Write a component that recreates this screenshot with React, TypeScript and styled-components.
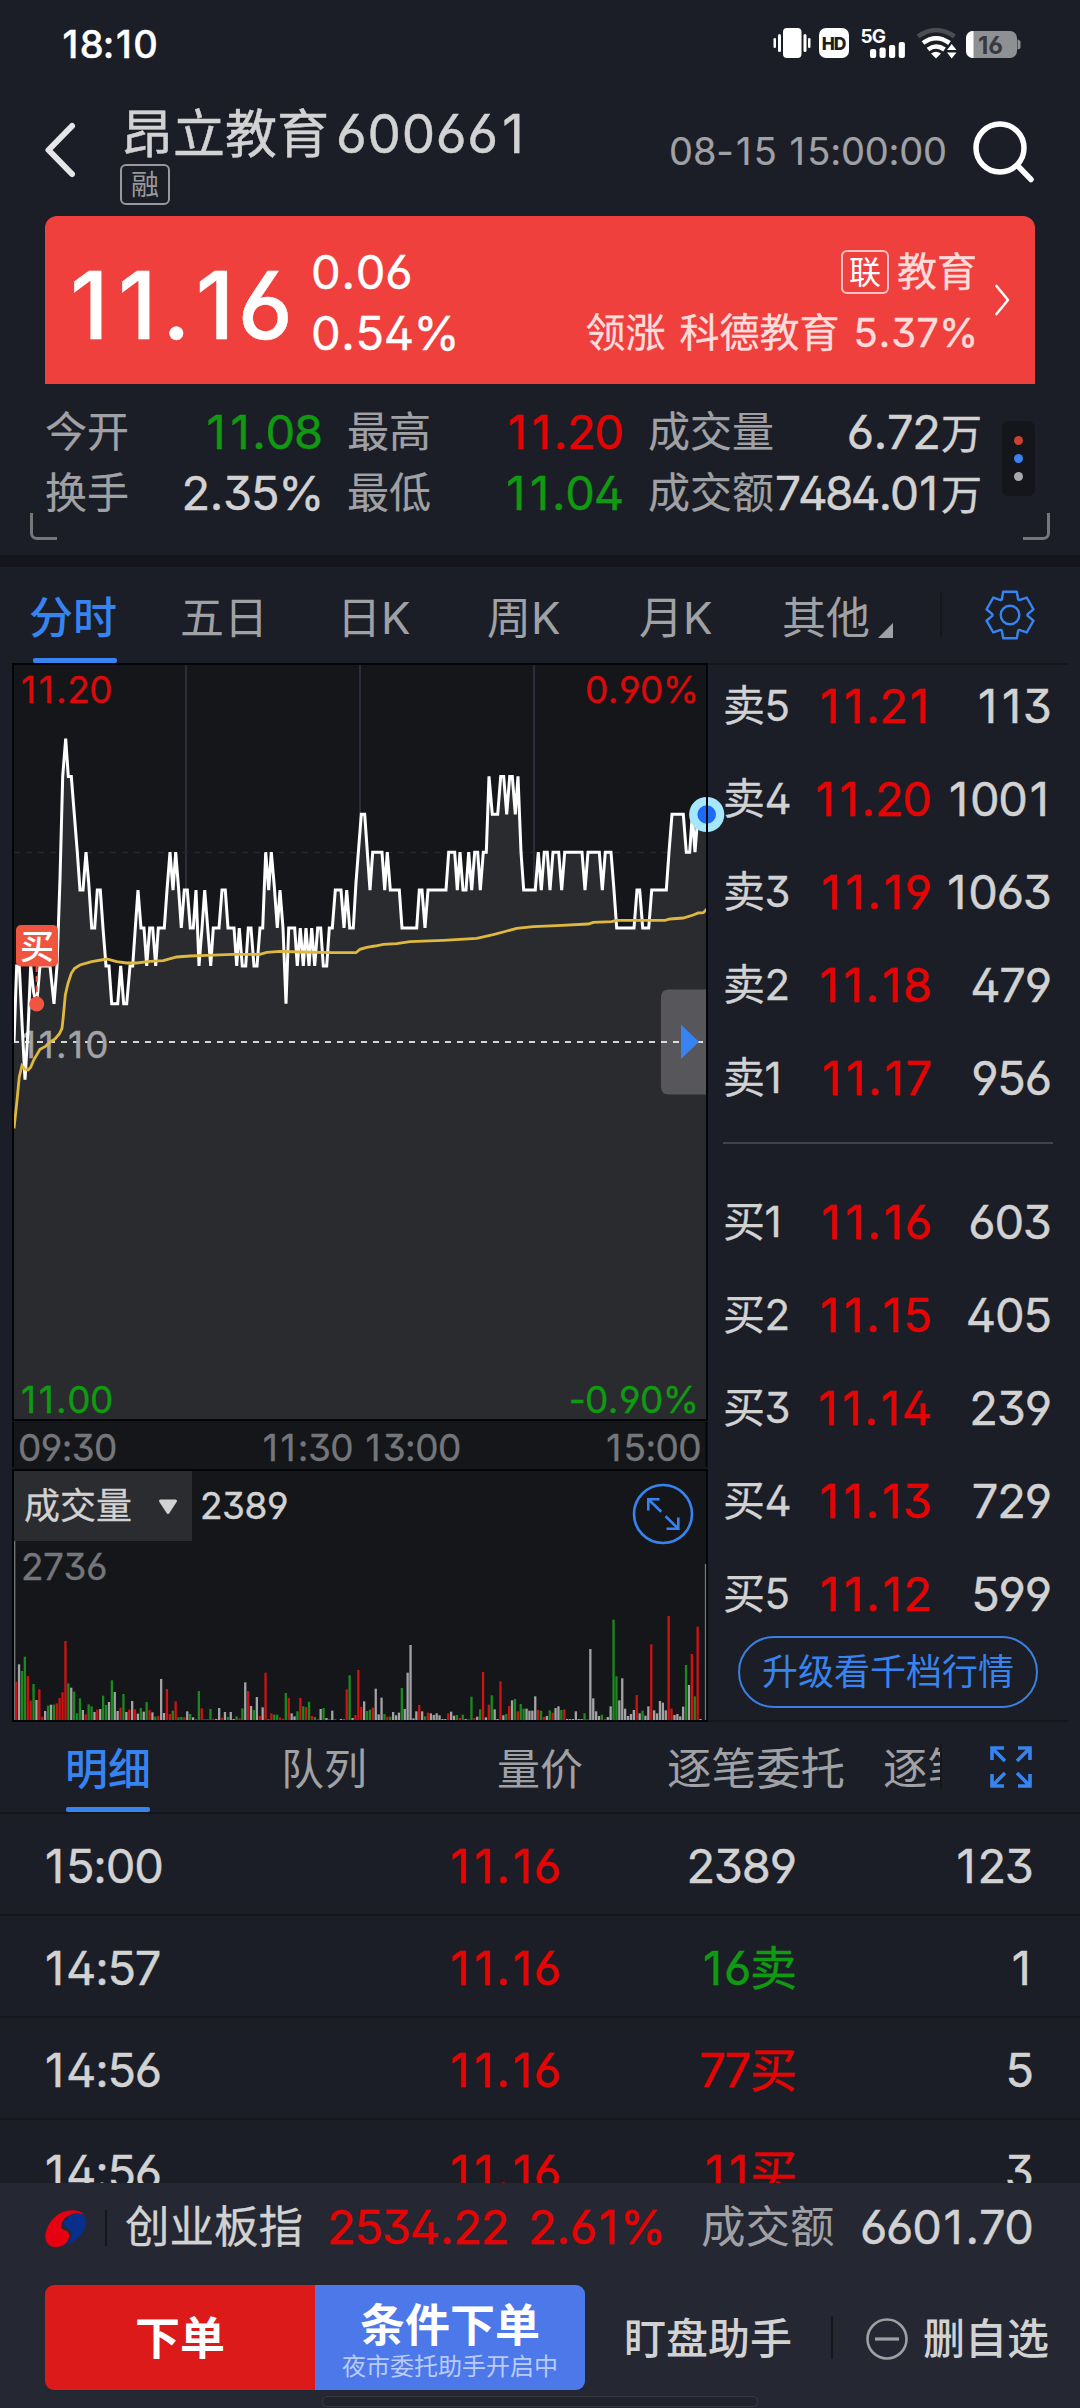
import React from "react";
import styled, { createGlobalStyle } from "styled-components";

const C = {
  bg: "#1b1e26",
  deep: "#15161b",
  line: "#15171d",
  footer: "#252732",
  red: "#e50404",
  green: "#109a12",
  light: "#d2d2d3",
  gray: "#a0a1a5",
  dim: "#75767a",
  blue: "#3784f0",
};

const Global = createGlobalStyle`
  html, body { margin: 0; background: ${C.bg}; }
  * { box-sizing: border-box; }
  body, text {
    font-family: Inter, "Noto Sans CJK SC", sans-serif;
    font-feature-settings: "ss01" 1;
    font-kerning: none;
  }
  body { color: ${C.light}; line-height: 1; }
  svg { display: block; overflow: visible; flex: none; }
`;

type Tone = "red" | "green" | "light" | "gray" | "dim" | "blue";

const Screen = styled.div`
  width: 1080px;
  height: 2408px;
  display: flex;
  flex-direction: column;
  overflow: hidden;
  background: ${C.bg};
  white-space: nowrap;
`;

const T = styled.span<{ $s: number; $tone?: Tone; $ls?: number; $w?: number; $stroke?: number }>`
  font-size: ${(p) => p.$s}px;
  line-height: 1.2;
  letter-spacing: ${(p) => p.$ls ?? 0}px;
  margin-right: ${(p) => -(p.$ls ?? 0)}px;
  font-weight: ${(p) => p.$w ?? 400};
  color: ${(p) => (p.$tone ? C[p.$tone] : "inherit")};
  -webkit-text-stroke: ${(p) => p.$stroke ?? 0}px currentColor;
`;

const One = styled.span`
  padding: 0 0.065em;
`;
const Point = styled.span`
  padding: 0 0.022em;
`;
const Percent = styled.span`
  margin-right: -0.03em;
`;
const PARTS: Record<string, typeof One> = { "1": One, ".": Point, "%": Percent };

// Figures set with a wider "1" and decimal point than the font gives them
const Num = ({ v, s, tone, ls = s * -0.026, w = 400, stroke = 0.45 }: { v: string; s: number; tone?: Tone; ls?: number; w?: number; stroke?: number }) => (
  <T $s={s} $tone={tone} $ls={ls} $w={w} $stroke={stroke}>
    {v.split("").map((c, i) => {
      const Part = PARTS[c];
      return Part ? <Part key={i}>{c}</Part> : c;
    })}
  </T>
);

/* ---------- status bar ---------- */
const StatusBar = styled.div`
  height: 89px;
  padding: 0 60px 0 60px;
  display: flex;
  align-items: center;
  justify-content: space-between;
  color: #fff;
`;

const StatusIcons = () => (
  <svg width="247" height="36" viewBox="773 26 247 36">
    <g fill="#fff">
      <rect x="783" y="27" width="18.500" height="30" rx="4" />
      <rect x="778" y="33" width="3" height="18" rx="1.500" />
      <rect x="773.500" y="37" width="2.500" height="10" rx="1.200" />
      <rect x="803.500" y="33" width="3" height="18" rx="1.500" />
      <rect x="808" y="37" width="2.500" height="10" rx="1.200" />
      <rect x="819" y="27" width="30" height="30" rx="7" />
      <text x="860.500" y="41.500" fontSize="19" fontWeight="700" letterSpacing="-1">5G</text>
      <rect x="870" y="48" width="6.200" height="9" rx="2" />
      <rect x="879.500" y="46.500" width="6.200" height="10.500" rx="2" />
      <rect x="889" y="44" width="6.200" height="13" rx="2" />
      <rect x="898.700" y="41" width="6.200" height="16" rx="2" />
    </g>
    <text x="833.500" y="48.500" fontSize="17.500" fontWeight="800" textAnchor="middle" fill={C.bg} letterSpacing="-1">HD</text>
    <g fill="none" strokeWidth="4.600">
      <path d="M918 35.500Q936 22.500 954.500 35.500" stroke="#4b4d55" />
      <path d="M923 42Q936 32.500 949.500 42" stroke="#fff" />
      <path d="M928 48.500Q936 42.500 944.500 48.500" stroke="#fff" />
    </g>
    <path d="M931 52.500Q936 49 941 52.500L936 57.500Z" fill="#fff" />
    <path d="M947 49L951.700 43L956.500 49ZM947 51.500L951.700 57.500L956.500 51.500Z" fill="#fff" />
    <rect x="966" y="30" width="51" height="27" rx="7" fill="#8f9093" />
    <path d="M973.500 30H973A7 7 0 0 0 966 37V50A7 7 0 0 0 973 57H973.500Z" fill="#fff" />
    <path d="M1017.500 38.500Q1020.500 39 1020.500 41V46Q1020.500 48 1017.500 48.500Z" fill="#8f9093" />
    <text x="990.500" y="52.500" fontSize="24" fontWeight="700" textAnchor="middle" fill="#38393d">16</text>
  </svg>
);

/* ---------- header ---------- */
const Header = styled.header`
  height: 127px;
  padding: 16px 45px 0 45px;
  display: flex;
  align-items: flex-start;
`;
const BackIcon = styled.svg`
  margin: 17px 44px 0 0;
`;
const TitleBlock = styled.div`
  flex: 1;
  display: flex;
  flex-direction: column;
  align-items: flex-start;
`;
const TitleLine = styled.div`
  height: 59px;
  padding: 1px 0 0 1px;
  display: flex;
  align-items: center;
  gap: 7px;
`;
const Badge = styled.span<{ $bright?: boolean }>`
  display: flex;
  align-items: center;
  justify-content: center;
  width: ${(p) => (p.$bright ? 48 : 50)}px;
  height: ${(p) => (p.$bright ? 44 : 41)}px;
  padding-top: 1px;
  border: 2px solid ${(p) => (p.$bright ? "#fbc4c3" : "#98999d")};
  border-radius: 6px;
  font-size: ${(p) => (p.$bright ? 32 : 28)}px;
  color: ${(p) => (p.$bright ? "#fff" : "#98999d")};
`;
const DateBlock = styled.div`
  display: flex;
  align-items: center;
  height: 94px;
  gap: 26px;
`;

/* ---------- price card ---------- */
const Card = styled.section`
  height: 168px;
  margin: 0 45px;
  padding: 0 25px 0 19px;
  border-radius: 12px 12px 0 0;
  background: #ef403d;
  color: #fff;
  display: flex;
  align-items: center;
`;
const Price = styled.div`
  width: 247px;
  padding-top: 12px;
`;
const Pair = styled.div<{ $end?: boolean }>`
  flex: ${(p) => (p.$end ? 1 : "none")};
  display: flex;
  flex-direction: column;
  align-items: ${(p) => (p.$end ? "flex-end" : "flex-start")};
  color: ${(p) => (p.$end ? "#fddcdb" : "#fff")};
  padding-top: 5px;
`;
const PairLine = styled.div<{ $gap?: number }>`
  height: 61px;
  display: flex;
  align-items: center;
  gap: ${(p) => p.$gap ?? 0}px;
`;
const Chevron = styled.svg`
  margin-left: 18px;
`;

/* ---------- stats ---------- */
const Stats = styled.section`
  position: relative;
  height: 171px;
  padding: 18px 45px 0 45px;
  display: flex;
`;
const StatTable = styled.div`
  display: grid;
  grid-template-columns: 278px 24px 277px 24px 334px;
  grid-auto-rows: 61px;
`;
const Stat = styled.div<{ $col: number }>`
  grid-column: ${(p) => p.$col};
  display: flex;
  align-items: center;
  justify-content: space-between;
`;
const Dots = styled.div`
  margin: 19px 0 0 20px;
  width: 33px;
  height: 75px;
  border-radius: 7px;
  background: ${C.deep};
  display: flex;
  flex-direction: column;
  align-items: center;
  justify-content: center;
  gap: 9px;
`;
const Dot = styled.i<{ $c: string }>`
  width: 9px;
  height: 9px;
  border-radius: 50%;
  background: ${(p) => p.$c};
`;
const Corner = styled.i<{ $right?: boolean }>`
  position: absolute;
  top: 129px;
  ${(p) => (p.$right ? "right: 30px; border-right: 3px solid #76777b; border-radius: 0 0 7px 0;" : "left: 30px; border-left: 3px solid #76777b; border-radius: 0 0 0 7px;")}
  width: 27px;
  height: 27px;
  border-bottom: 3px solid #76777b;
`;
const Band = styled.div`
  height: 12px;
  background: ${C.deep};
`;

/* ---------- tabs ---------- */
const Tabs = styled.nav`
  height: 96px;
  padding-left: 29px;
  display: flex;
`;
const Tab = styled.div<{ $w: number; $active?: boolean; $size?: number }>`
  width: ${(p) => p.$w}px;
  display: flex;
  flex-direction: column;
  align-items: flex-start;
  font-size: ${(p) => p.$size ?? 44}px;
  font-weight: ${(p) => (p.$active ? 500 : 400)};
  color: ${(p) => (p.$active ? C.blue : C.gray)};
  overflow: hidden;
`;
const TabLabel = styled.div<{ $h: number; $pt: number }>`
  height: ${(p) => p.$h}px;
  padding-top: ${(p) => p.$pt}px;
  display: flex;
  align-items: center;
`;
const Underline = styled.i<{ $ml?: number }>`
  width: 84px;
  height: 5px;
  margin-left: ${(p) => p.$ml ?? 0}px;
  border-radius: 2px;
  background: ${C.blue};
`;
const TabMark = styled.svg`
  margin: 26px 0 0 8px;
`;
const VRule = styled.i<{ $h: number; $m: string }>`
  width: 2px;
  height: ${(p) => p.$h}px;
  margin: ${(p) => p.$m};
  background: ${C.line};
  flex: none;
`;
const GearIcon = styled.svg`
  margin: 24px 0 0 44px;
`;

const gearPath = () => {
  const pts: string[] = [];
  const tooth: [number, number][] = [
    [-8.2, -15.5],
    [-6.8, -23.2],
    [6.8, -23.2],
    [8.2, -15.5],
  ];
  for (let i = 0; i < 6; i++) {
    const a = (i * Math.PI) / 3;
    tooth.forEach(([x, y]) => {
      pts.push(`${(x * Math.cos(a) - y * Math.sin(a)).toFixed(2)} ${(x * Math.sin(a) + y * Math.cos(a)).toFixed(2)}`);
    });
  }
  return `M${pts.join("L")}Z`;
};

/* ---------- main area ---------- */
const Main = styled.section`
  height: 1059px;
  display: flex;
  padding-left: 12px;
`;
const Charts = styled.div`
  width: 696px;
  position: relative;
  z-index: 1;
`;

// Intraday prices: [x in thirds of a pixel, ticks of 0.01 above 11.10]
const PRICES: [number, number][] = [
  [42, 0], [50, 2], [58, 2], [66, 0.5], [75, -1], [84, 0.3], [92, 2], [101, 1.3], [110, 1], [120, 2], [150, 2], [162, 1], [171, 2],
  [180, 4.3], [188, 7], [197, 8], [205, 7], [214, 7], [223, 6], [232, 5], [240, 4], [249, 4], [258, 5], [266, 4.2], [275, 3], [284, 3],
  [292, 4], [301, 4], [309, 3], [318, 2], [327, 2], [335, 1], [353, 1], [362, 2], [371, 1], [380, 1], [390, 2], [398, 2], [406, 3], [414, 4],
  [423, 3], [432, 3], [440, 2], [449, 3], [458, 3], [467, 2], [475, 3], [493, 3], [501, 4], [510, 5], [519, 4], [527, 5], [536, 4], [544, 3],
  [553, 4], [562, 4], [571, 3], [580, 3], [588, 4], [597, 2], [606, 3], [614, 4], [623, 3], [632, 2], [640, 3], [657, 3], [666, 4], [676, 4],
  [684, 3], [702, 3], [710, 2], [718, 3], [727, 2], [737, 2], [745, 3], [753, 3], [762, 2], [771, 2], [780, 3], [788, 3], [797, 5], [806, 4],
  [814, 5], [823, 4.1], [832, 3], [840, 4], [849, 3], [858, 1], [866, 3], [884, 3], [892, 2], [901, 3], [910, 2], [918, 3], [927, 2],
  [935, 3], [944, 2], [953, 3], [962, 3], [970, 2], [980, 2], [988, 3], [997, 3], [1006, 4], [1023, 4], [1032, 3], [1040, 4], [1049, 3],
  [1060, 3], [1068, 4.2], [1084, 6], [1094, 6], [1110, 4], [1118, 5], [1146, 5], [1154, 4], [1162, 5], [1171, 4], [1198, 4], [1206, 3],
  [1250, 3], [1258, 4], [1266, 4], [1275, 3], [1284, 4], [1338, 4], [1346, 5], [1364, 5], [1372, 4], [1380, 5], [1389, 4], [1398, 4],
  [1406, 5], [1415, 4], [1424, 5], [1433, 5], [1441, 4], [1450, 5], [1459, 5], [1467, 7], [1477, 6], [1493, 6], [1502, 7], [1511, 7],
  [1520, 6], [1529, 7], [1537, 7], [1546, 6], [1554, 7], [1563, 5], [1571, 4], [1606, 4], [1615, 5], [1624, 4], [1633, 5], [1642, 5],
  [1650, 4], [1659, 5], [1676, 5], [1685, 4], [1694, 5], [1746, 5], [1755, 4], [1764, 5], [1798, 5], [1807, 4], [1816, 5], [1833, 5],
  [1841, 4.1], [1850, 3], [1902, 3], [1911, 4], [1919, 4], [1928, 3], [1946, 3], [1955, 4], [1999, 4], [2007, 5], [2016, 6], [2050, 6],
  [2059, 5], [2069, 5], [2077, 6], [2085, 5], [2094, 6], [2118, 6],
];

// Average price line: [x, y] in thirds of a pixel
const AVERAGE: [number, number][] = [
  [42, 1405], [50, 1330], [58, 1250], [66, 1217], [75, 1228], [84, 1230], [92, 1222], [101, 1200], [120, 1168], [135, 1160], [150, 1146],
  [165, 1137], [178, 1122], [186, 1105], [190, 1070], [196, 1005], [204, 970], [214, 940], [224, 925], [240, 915], [275, 905], [320, 897],
  [350, 905], [380, 909], [410, 909], [450, 904], [490, 902], [530, 891], [570, 888], [620, 886], [700, 883], [780, 883], [800, 877],
  [840, 874], [900, 876], [1000, 878], [1068, 878], [1080, 868], [1100, 862], [1125, 858], [1150, 853], [1190, 851], [1230, 845],
  [1330, 841], [1430, 835], [1480, 824], [1510, 816], [1550, 805], [1600, 800], [1670, 797], [1765, 792], [1780, 787], [1835, 785],
  [1850, 781], [1995, 781], [2010, 777], [2050, 774], [2080, 765], [2095, 759], [2110, 758], [2120, 748],
];

// One-minute volumes: colour letter and height in thirds of a pixel
const VOLUME =
  "r115 w167 g147 g190 r132 r58 g108 w60 r92 r10 w27 g43 w46 g46 r50 r66 r83 r237 g110 w97 g85 g20 g65 w30 r17 g47 g41 w24 r31 w33 g73 g45 w54 g119 w84 w27 r37 g78 w24 r31 w57 r32 w19 g36 w25 g54 r30 w23 g10 r12 w123 w21 r93 r18 g28 r56 g8 g9 r8 w26 g18 w8 r3 g87 r35 r3 r3 g33 r4 w3 w36 r7 w24 g9 w24 w3 g11 r5 g35 w113 r87 w42 g30 w69 r12 w38 r142 g3 r20 g16 g16 r8 r4 g81 r66 w20 w11 g26 r66 g41 r39 g55 r12 g9 r3 w33 g36 w6 r3 w28 r3 w0 w3 g3 r92 g134 w6 r15 r150 r39 w56 g27 g31 r37 w94 w17 w67 g18 r10 g10 w24 w14 w22 g96 w33 w142 w225 w5 w26 r45 w26 g11 r22 w20 w15 w20 w14 w3 w3 r20 w25 w13 g15 r6 g16 w3 r3 g70 r6 w10 g32 r144 w8 r46 g74 w32 w3 r116 w14 g18 r42 w59 g63 r26 g48 g34 w34 w28 w28 w71 r30 g28 r9 w12 g29 r22 w36 w41 g30 r32 w3 w3 w3 w26 w3 w3 g20 r3 w213 w65 w26 w12 g16 r4 w9 w41 g301 g131 w59 w125 w34 w12 w18 w30 r75 w20 g28 w13 w41 r227 w29 w20 w57 w52 w29 r312 r34 w15 w18 w11 w40 g165 w105 r198 g71 r280 w3".split(" ");
const BAR: Record<string, string> = { r: "#cf1212", g: "#1b8a1e", w: "#a3a3a5" };

const tickY = (k: number) => 1041.7 - 37.9 * k;
const pricePoints = PRICES.map(([x, k]) => `${(x / 3).toFixed(1)},${tickY(k).toFixed(1)}`).join(" ");
const avgPoints = AVERAGE.map(([x, y]) => `${(x / 3).toFixed(1)},${(660 + y / 3).toFixed(1)}`).join(" ");

// Chart label, with the same wider "1" as the figures elsewhere
const Label = ({ x, y, v, fill, end }: { x: number; y: number; v: string; fill: string; end?: boolean }) => (
  <text x={x} y={y} fill={fill} stroke={fill} strokeWidth=".35" fontSize="37" letterSpacing="-.6" textAnchor={end ? "end" : "start"}>
    {v.split("").map((c, i) =>
      c === "1" || c === "." ? (
        <tspan key={i} letterSpacing={c === "1" ? "2.200" : ".6"} dx={c === "1" && i > 0 ? 0.6 : 0}>{c}</tspan>
      ) : (
        c
      )
    )}
  </text>
);

const PriceChart = () => (
  <svg width="696" height="806" viewBox="12 663 696 806">
    <rect x="13" y="664" width="694" height="756" fill="#15161a" stroke="#030408" strokeWidth="2" />
    <rect x="12" y="1421" width="696" height="48" fill="#15161a" />
    {[186, 360, 534].map((x) => (
      <rect key={x} x={x - 1} y="665" width="2" height="754" fill="#2c2d38" />
    ))}
    <path d="M14 852.500H706" stroke="#26272c" strokeDasharray="6 6" strokeWidth="1.500" />
    <polygon points={`14,1419 ${pricePoints} 706,1419`} fill="#2a2b2f" />
    <path d="M14 1042H706" stroke="#d6d6d6" strokeDasharray="6 6" strokeDashoffset="1" strokeWidth="2" />
    <Label x={21} y={702.5} v="11.20" fill="#d80b0b" />
    <Label x={698.5} y={702.5} v="0.90%" fill="#d80b0b" end />
    <Label x={21} y={1057.5} v="11.10" fill="#a3a3a5" />
    <Label x={21} y={1412.5} v="11.00" fill={C.green} />
    <Label x={698.5} y={1412.5} v="-0.90%" fill={C.green} end />
    <polyline points={pricePoints} fill="none" stroke="#fff" strokeWidth="3" />
    <polyline points={avgPoints} fill="none" stroke="#dfb93f" strokeWidth="2.800" />
    <path d="M36.700 966V1000" stroke="#f0553f" strokeWidth="2" strokeDasharray="6 4" />
    <circle cx="36.700" cy="1004" r="7.500" fill="#f0553f" />
    <rect x="16" y="925" width="42" height="41.500" rx="5" fill="#f0553f" />
    <text x="37" y="958.500" fontSize="34" fontWeight="500" textAnchor="middle" fill="#fff">买</text>
    <path d="M707 989.500H669Q661 989.500 661 997.500V1086.500Q661 1094.500 669 1094.500H707Z" fill="#fff" fillOpacity=".21" />
    <path d="M681 1024.500L699 1042L681 1059Z" fill={C.blue} />
    <circle cx="706.700" cy="814.500" r="17.600" fill="#a6e7fb" />
    <circle cx="706.700" cy="814.500" r="9.300" fill="#1a6bf5" />
    <path d="M707 663V1421M13 663V1421M13 1422V1467M706.500 1422V1467M12 1420H708" stroke="#030408" strokeWidth="2" />
    <Label x={18} y={1460.5} v="09:30" fill={C.dim} />
    <Label x={353} y={1460.5} v="11:30" fill={C.dim} end />
    <Label x={365.5} y={1460.5} v="13:00" fill={C.dim} />
    <Label x={701} y={1460.5} v="15:00" fill={C.dim} end />
  </svg>
);

const VolumePanel = styled.div`
  height: 253px;
  border: 2px solid #030408;
  background: #15161a;
  display: flex;
  flex-direction: column;
`;
const VolumeHead = styled.div`
  display: flex;
  height: 70px;
  align-items: center;
`;
const Picker = styled.div`
  width: 178px;
  height: 70px;
  padding: 2px 14px 0 10px;
  display: flex;
  align-items: center;
  justify-content: space-between;
  background: #2b2c30;
  margin-right: 8px;
`;
const ExpandRound = styled.svg`
  margin: 16px 12px 0 auto;
`;
const VolumeMax = styled.div`
  height: 50px;
  margin-bottom: -50px;
  padding: 4px 0 0 7px;
`;

const ExpandCircle = () => (
  <ExpandRound width="62" height="62" viewBox="-31 -31 62 62" fill="none" stroke={C.blue} strokeWidth="2.600">
    <circle r="29" />
    <path d="M-3.500 -14.700H-14.700V-3.500M-14.700 -14.700L-1.700 -2.200M3.500 14.700H15.300V3.500M15.300 14.700L2.500 2.200" />
  </ExpandRound>
);

const VolumeBars = () => (
  <svg width="692" height="179" viewBox="14 1541 692 179">
    <path d="M14.700 1541V1720M705.500 1564V1720" stroke="#77787b" strokeWidth="1.300" />
    {VOLUME.map((v, i) => {
      const h = Number(v.slice(1)) / 3;
      return <rect key={i} x={15 + i * 2.9} y={1720 - h} width="2.300" height={h} fill={BAR[v[0]]} />;
    })}
  </svg>
);

/* ---------- order book ---------- */
const Book = styled.aside`
  flex: 1;
  margin-right: 12px;
  padding: 0 15px;
  border-top: 2px solid ${C.line};
  border-bottom: 2px solid ${C.line};
  display: flex;
  flex-direction: column;
`;
const Quotes = styled.div<{ $mt: number }>`
  margin-top: ${(p) => p.$mt}px;
`;
const Quote = styled.div`
  height: 93px;
  display: grid;
  grid-template-columns: 80px 129px 120px;
  align-items: center;
  > :nth-child(n + 2) {
    justify-self: end;
  }
`;
const BookRule = styled.div`
  height: 2px;
  margin: 17px 0 0;
  background: #41434b;
`;
const Upgrade = styled.div`
  width: 300px;
  height: 72px;
  margin: -5px 0 0 15px;
  padding-top: 2px;
  border: 2px solid #3b7fe0;
  border-radius: 36px;
  display: flex;
  align-items: center;
  justify-content: center;
`;

/* ---------- ticks ---------- */
const DetailTabs = styled.nav`
  height: 92px;
  padding-left: 65px;
  border-bottom: 2px solid ${C.line};
  display: flex;
  flex: none;
`;
const FullIcon = styled.svg`
  margin: 24px 0 0 48px;
`;
const Ticks = styled.div`
  height: 369px;
  overflow: hidden;
  flex: none;
`;
const TickRow = styled.div`
  height: 102px;
  padding: 4px 46px 0 42px;
  border-bottom: 2px solid ${C.line};
  display: grid;
  grid-template-columns: 200px 319px 236px 237px;
  align-items: center;
  > :nth-child(n + 2) {
    justify-self: end;
  }
`;

/* ---------- footer ---------- */
const Footer = styled.footer`
  flex: 1;
  background: ${C.footer};
  display: flex;
  flex-direction: column;
`;
const IndexRow = styled.div`
  height: 102px;
  padding: 0 46px 13px 45px;
  display: flex;
  align-items: center;
`;
const Figures = styled.div`
  flex: 1;
  margin-left: 24px;
  display: grid;
  grid-template-columns: 201px 173px 1fr auto;
  align-items: center;
`;
const Actions = styled.div`
  height: 105px;
  padding-left: 45px;
  display: flex;
  align-items: center;
`;
const ActionButton = styled.div<{ $blue?: boolean }>`
  width: 270px;
  height: 105px;
  padding-top: ${(p) => (p.$blue ? 4 : 2)}px;
  display: flex;
  flex-direction: column;
  align-items: center;
  justify-content: center;
  color: #fff;
  background: ${(p) => (p.$blue ? "#4c78ea" : "#dc1a1a")};
  border-radius: ${(p) => (p.$blue ? "0 9px 9px 0" : "9px 0 0 9px")};
`;
const SubLabel = styled.span`
  font-size: 24px;
  line-height: 27px;
  color: #b9cbf9;
`;
const Plain = styled.div<{ $ml: number }>`
  margin-left: ${(p) => p.$ml}px;
  padding-top: 3px;
  display: flex;
  align-items: center;
  gap: 15px;
`;
const NavPill = styled.div`
  width: 434px;
  height: 9px;
  margin: 7px auto 0;
  border-radius: 5px;
  background: #22242b;
  box-shadow: 0 0 0 1px #363843;
`;

const SELL = [["卖5", "11.21", "113"], ["卖4", "11.20", "1001"], ["卖3", "11.19", "1063"], ["卖2", "11.18", "479"], ["卖1", "11.17", "956"]];
const BUY = [["买1", "11.16", "603"], ["买2", "11.15", "405"], ["买3", "11.14", "239"], ["买4", "11.13", "729"], ["买5", "11.12", "599"]];
const TRADES: [string, string, string, Tone, string][] = [
  ["15:00", "11.16", "2389", "light", "123"],
  ["14:57", "11.16", "16卖", "green", "1"],
  ["14:56", "11.16", "77买", "red", "5"],
  ["14:56", "11.16", "11买", "red", "3"],
];
const STATS: [number, string, string, string, Tone][] = [
  [1, "今开", "11.08", "", "green"],
  [3, "最高", "11.20", "", "red"],
  [5, "成交量", "6.72", "万", "light"],
  [1, "换手", "2.35%", "", "light"],
  [3, "最低", "11.04", "", "green"],
  [5, "成交额", "7484.01", "万", "light"],
];

const QuoteRows = ({ rows }: { rows: string[][] }) => (
  <>
    {rows.map(([n, p, q]) => (
      <Quote key={n}>
        <T $s={42} $ls={-0.5} $stroke={0.3}>{n}</T>
        <Num s={47} tone="red" v={p} />
        <Num s={47} v={q} />
      </Quote>
    ))}
  </>
);

export default function App() {
  return (
    <Screen>
      <Global />
      <StatusBar>
        <Num s={38} w={500} ls={-0.9} v="18:10" />
        <StatusIcons />
      </StatusBar>

      <Header>
        <BackIcon width="31" height="56" viewBox="0 0 31 56" fill="none" stroke="#e6e6e8" strokeWidth="6" strokeLinecap="round" strokeLinejoin="round">
          <path d="M27 4L3.500 28L27 52" />
        </BackIcon>
        <TitleBlock>
          <TitleLine>
            <T $s={52} $stroke={0.5}>昂立教育</T>
            <Num s={53} ls={0.7} v="600661" />
          </TitleLine>
          <Badge>融</Badge>
        </TitleBlock>
        <DateBlock>
          <Num s={38} ls={-0.2} stroke={0.2} tone="gray" v="08-15 15:00:00" />
          <svg width="62" height="62" viewBox="0 0 62 62" fill="none" stroke="#fff" strokeWidth="5.500" strokeLinecap="round">
            <circle cx="27" cy="27" r="24" />
            <path d="M44.500 44.500L58 58.500" />
          </svg>
        </DateBlock>
      </Header>

      <Card>
        <Price>
          <Num s={93} w={500} ls={-2.6} v="11.16" />
        </Price>
        <Pair>
          <PairLine><Num s={47} ls={-0.2} v="0.06" /></PairLine>
          <PairLine><Num s={47} ls={-0.4} v="0.54%" /></PairLine>
        </Pair>
        <Pair $end>
          <PairLine $gap={8}>
            <Badge $bright>联</Badge>
            <T $s={40} $stroke={0.3}>教育</T>
          </PairLine>
          <PairLine $gap={14}>
            <T $s={40} $stroke={0.3}>领涨</T>
            <T $s={40} $stroke={0.3}>科德教育</T>
            <Num s={40} ls={0.1} v="5.37%" />
          </PairLine>
        </Pair>
        <Chevron width="15" height="32" viewBox="0 0 15 32" fill="none" stroke="#fff" strokeWidth="2.600" strokeLinecap="round" strokeLinejoin="round">
          <path d="M1.500 2L13 16L1.500 30" />
        </Chevron>
      </Card>

      <Stats>
        <StatTable>
          {STATS.map(([col, label, value, unit, tone]) => (
            <Stat key={label} $col={col}>
              <T $s={42} $tone="gray" $stroke={0.2}>{label}</T>
              <span>
                <Num s={value.length > 6 ? 46 : 47} ls={value.length > 6 ? -2.8 : -1.3} tone={tone} v={value} />
                {unit && <T $s={41} $tone={tone} $stroke={0.4}>{unit}</T>}
              </span>
            </Stat>
          ))}
        </StatTable>
        <Dots>
          <Dot $c="#c8432f" />
          <Dot $c="#3a82ef" />
          <Dot $c="#a9a9ad" />
        </Dots>
        <Corner />
        <Corner $right />
      </Stats>

      <Band />

      <Tabs>
        <Tab $w={151} $active>
          <TabLabel $h={91} $pt={10}>分时</TabLabel>
          <Underline $ml={4} />
        </Tab>
        {[["五日", 157], ["日K", 150], ["周K", 152], ["月K", 143]].map(([t, w]) => (
          <Tab key={t} $w={w as number}>
            <TabLabel $h={91} $pt={10}>{t}</TabLabel>
          </Tab>
        ))}
        <Tab $w={114}>
          <TabLabel $h={91} $pt={10}>
            其他
            <TabMark width="15" height="15" viewBox="0 0 15 15">
              <path d="M15 0V15H0Z" fill={C.gray} />
            </TabMark>
          </TabLabel>
        </Tab>
        <VRule $h={45} $m="25px 0 0 44px" />
        <GearIcon width="48" height="48" viewBox="-24 -24 48 48" fill="none" stroke={C.blue} strokeWidth="2.400" strokeLinejoin="round">
          <path d={gearPath()} />
          <circle r="9.300" />
        </GearIcon>
      </Tabs>

      <Main>
        <Charts>
          <PriceChart />
          <VolumePanel>
            <VolumeHead>
              <Picker>
                <T $s={36} $stroke={0.3}>成交量</T>
                <svg width="20" height="16" viewBox="0 0 20 16">
                  <path d="M2.500 2H17.500L10 13.500Z" fill={C.light} stroke={C.light} strokeWidth="3" strokeLinejoin="round" />
                </svg>
              </Picker>
              <Num s={37} ls={-0.5} v="2389" />
              <ExpandCircle />
            </VolumeHead>
            <VolumeMax><Num s={37} tone="dim" ls={-0.5} stroke={0.3} v="2736" /></VolumeMax>
            <VolumeBars />
          </VolumePanel>
        </Charts>
        <Book>
          <Quotes $mt={-5}><QuoteRows rows={SELL} /></Quotes>
          <BookRule />
          <Quotes $mt={32}><QuoteRows rows={BUY} /></Quotes>
          <Upgrade><T $s={36} $tone="blue">升级看千档行情</T></Upgrade>
        </Book>
      </Main>

      <DetailTabs>
        <Tab $w={216} $active $size={43}>
          <TabLabel $h={85} $pt={9}>明细</TabLabel>
          <Underline $ml={1} />
        </Tab>
        {[["队列", 216], ["量价", 170], ["逐笔委托", 216], ["逐笔", 57]].map(([t, w]) => (
          <Tab key={t} $w={w as number} $size={t.toString().length > 2 || w === 57 ? 44.5 : 43}>
            <TabLabel $h={85} $pt={9}>{t}</TabLabel>
          </Tab>
        ))}
        <VRule $h={45} $m="22px 0 0 0" />
        <FullIcon width="42" height="42" viewBox="0 0 42 42" fill="none" stroke={C.blue} strokeWidth="3.600">
          <path d="M14 2H2V14M2 2L15 15M28 2H40V14M40 2L27 15M14 40H2V28M2 40L15 27M28 40H40V28M40 40L27 27" />
        </FullIcon>
      </DetailTabs>

      <Ticks>
        {TRADES.map(([time, price, vol, tone, n], i) => (
          <TickRow key={i}>
            <Num s={47} v={time} />
            <Num s={47} tone="red" v={price} />
            <Num s={47} tone={tone} v={vol} />
            <Num s={47} v={n} />
          </TickRow>
        ))}
      </Ticks>

      <Footer>
        <IndexRow>
          <svg width="42" height="38" viewBox="0 0 42 38">
            <path d="M40 6C33 -1 18 -1 8 10C-2 21 -3 37 10 38C21 38 25 31 24 25C23 20 15 22 16 16C18 7 30 1 40 6Z" fill="#e60012" />
            <path d="M41 10C38 3 28 3 21 10C14 17 25 18 26 23C27 29 24 34 19 37C30 34 43 22 41 10Z" fill="#082f8c" />
          </svg>
          <VRule $h={36} $m="0 18px 0 18px" />
          <T $s={44.5} $stroke={0.3}>创业板指</T>
          <Figures>
            <Num s={47} tone="red" v="2534.22" />
            <Num s={47} ls={-1.3} tone="red" v="2.61%" />
            <T $s={44.5} $tone="gray">成交额</T>
            <Num s={47} v="6601.70" />
          </Figures>
        </IndexRow>
        <Actions>
          <ActionButton><T $s={45} $w={700}>下单</T></ActionButton>
          <ActionButton $blue>
            <T $s={45} $w={700}>条件下单</T>
            <SubLabel>夜市委托助手开启中</SubLabel>
          </ActionButton>
          <Plain $ml={39}><T $s={42} $w={500}>盯盘助手</T></Plain>
          <VRule $h={43} $m="0 0 0 39px" />
          <Plain $ml={33}>
            <svg width="42" height="42" viewBox="-21 -21 42 42" fill="none" stroke="#9fa0a4" strokeWidth="2.600">
              <circle r="19.500" />
              <path d="M-12 0H12" strokeWidth="3.200" />
            </svg>
            <T $s={42} $w={500}>删自选</T>
          </Plain>
        </Actions>
        <NavPill />
      </Footer>
    </Screen>
  );
}
